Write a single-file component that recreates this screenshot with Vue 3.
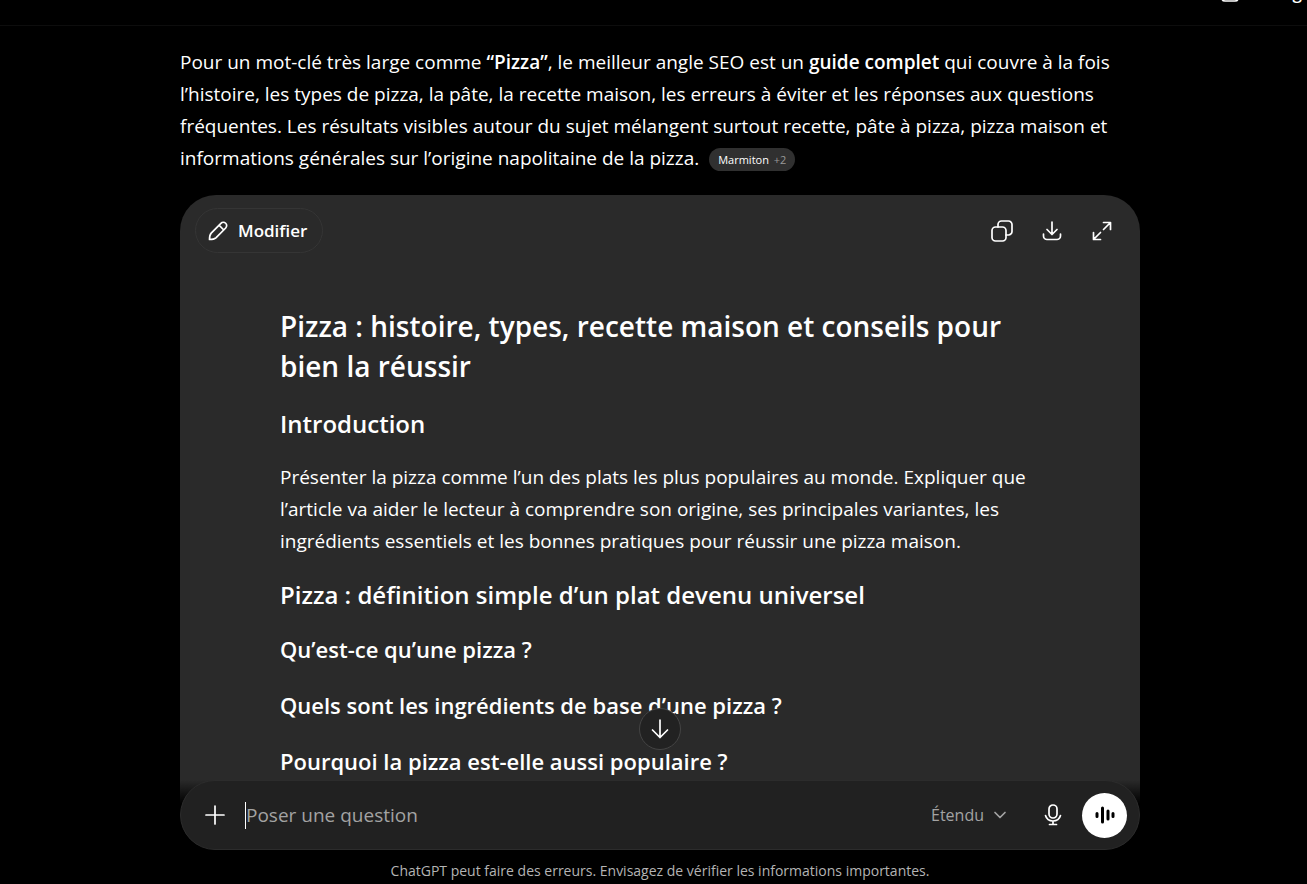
<script setup>
import { ref } from 'vue'

const question = ref('')
const mode = ref('Étendu')
const sections = [
  'Qu’est-ce qu’une pizza ?',
  'Quels sont les ingrédients de base d’une pizza ?',
  'Pourquoi la pizza est-elle aussi populaire ?',
]
</script>

<template>
  <div class="app">
    <header class="topbar">
      <button class="share" type="button">
        <svg width="20" height="20" viewBox="0 0 20 20" aria-hidden="true">
          <path d="M10 12V2M6 6l4-4 4 4M2 11v4a3 3 0 0 0 3 3h10a3 3 0 0 0 3-3v-4" />
        </svg>
        <span>Partager</span>
      </button>
    </header>

    <main class="thread">
      <p class="body intro">
        Pour un mot-clé très large comme <strong>“Pizza”</strong>, le meilleur angle SEO est un
        <strong>guide complet</strong> qui couvre à la fois l’histoire, les types de pizza, la pâte,
        la recette maison, les erreurs à éviter et les réponses aux questions fréquentes. Les
        résultats visibles autour du sujet mélangent surtout recette, pâte à pizza, pizza maison et
        informations générales sur l’origine napolitaine de la pizza.
        <a class="source" href="#">Marmiton <span>+2</span></a>
      </p>

      <article class="card">
        <div class="toolbar">
          <button class="edit" type="button">
            <svg width="22" height="22" viewBox="0 0 22 22" aria-hidden="true">
              <path d="M2.5 19.5 C2.5 16.5 2.8 14.6 4.2 13.1 L13.9 3.3 A3.2 3.2 0 0 1 18.7 8 L8.9 17.8 C7.4 19.2 5.5 19.5 2.5 19.5 Z M12 5.2 L16.8 10" />
            </svg>
            Modifier
          </button>
          <div class="actions">
            <button type="button" aria-label="Copier">
              <svg width="24" height="24" viewBox="0 0 24 24" aria-hidden="true">
                <rect x="2" y="8" width="14" height="14" rx="3.5" />
                <path d="M8 8V5.5A3.5 3.5 0 0 1 11.5 2H18.5A3.5 3.5 0 0 1 22 5.5V12.5A3.5 3.5 0 0 1 18.5 16H16" />
              </svg>
            </button>
            <button type="button" aria-label="Télécharger">
              <svg width="24" height="24" viewBox="0 0 24 24" aria-hidden="true">
                <path d="M12 3V15M7 10.5L12 15.5L17 10.5M3.5 15V17A3.5 3.5 0 0 0 7 20.5H17A3.5 3.5 0 0 0 20.5 17V15" />
              </svg>
            </button>
            <button type="button" aria-label="Agrandir">
              <svg width="24" height="24" viewBox="0 0 24 24" aria-hidden="true">
                <path d="M13.5 10.5L20 4M13.5 3.5H20.5V10.5M10.5 13.5L4 20M3.5 13.5V20.5H10.5" />
              </svg>
            </button>
          </div>
        </div>

        <div class="document">
          <h1>Pizza : histoire, types, recette maison et conseils pour bien la réussir</h1>
          <h2>Introduction</h2>
          <p class="body">
            Présenter la pizza comme l’un des plats les plus populaires au monde. Expliquer que
            l’article va aider le lecteur à comprendre son origine, ses principales variantes, les
            ingrédients essentiels et les bonnes pratiques pour réussir une pizza maison.
          </p>
          <h2>Pizza : définition simple d’un plat devenu universel</h2>
          <h3 v-for="title in sections" :key="title">{{ title }}</h3>
        </div>
      </article>
    </main>

    <footer class="dock">
      <button class="scroll-down" type="button" aria-label="Aller en bas">
        <svg width="24" height="24" viewBox="0 0 24 24" aria-hidden="true">
          <path d="M12 3V20.5M4.5 13L12 20.5L19.5 13" />
        </svg>
      </button>
      <form class="composer" @submit.prevent>
        <button class="icon" type="button" aria-label="Ajouter">
          <svg width="22" height="22" viewBox="0 0 22 22" aria-hidden="true">
            <path d="M11 2V20M2 11H20" />
          </svg>
        </button>
        <div class="field">
          <span class="caret"></span>
          <input v-model="question" type="text" placeholder="Poser une question" aria-label="Poser une question" />
        </div>
        <label class="mode">
          <select v-model="mode" aria-label="Mode de réflexion">
            <option>Étendu</option>
          </select>
          <svg width="14" height="14" viewBox="0 0 14 14" aria-hidden="true">
            <path d="M2 4.5L7 9.5L12 4.5" />
          </svg>
        </label>
        <button class="icon" type="button" aria-label="Dicter">
          <svg width="24" height="24" viewBox="0 0 24 24" aria-hidden="true">
            <rect x="8" y="2" width="8" height="13" rx="4" />
            <path d="M4.5 12.5C5.5 16 8.5 18 12 18S18.5 16 19.5 12.5M12 18V21.5M8.5 21.5H15.5" />
          </svg>
        </button>
        <button class="voice" type="button" aria-label="Mode vocal">
          <svg width="22" height="22" viewBox="0 0 22 22" aria-hidden="true">
            <path d="M3 9.5V12.5M8.5 4V18M14 7V15M19 9.5V12.5" />
          </svg>
        </button>
      </form>
      <p class="notice">ChatGPT peut faire des erreurs. Envisagez de vérifier les informations importantes.</p>
    </footer>
  </div>
</template>

<style>
body {
  margin: 0;
  background: #000;
}
</style>

<style scoped>
.app {
  height: 100vh;
  display: flex;
  flex-direction: column;
  overflow: hidden;
  background: #000;
  color: #fff;
  font-family: "Open Sans", "Noto Sans", sans-serif;
}

button,
input,
select {
  font: inherit;
  color: inherit;
  background: none;
  border: 0;
  padding: 0;
  margin: 0;
}

button {
  display: flex;
  align-items: center;
  justify-content: center;
}

svg {
  display: block;
  flex: none;
  fill: none;
  stroke: currentColor;
  stroke-width: 1.7;
  stroke-linecap: round;
  stroke-linejoin: round;
}

h1,
h2,
h3,
p {
  margin: 0;
}

.topbar {
  flex: none;
  height: 25px;
  display: flex;
  justify-content: flex-end;
  align-items: flex-start;
  overflow: hidden;
  border-bottom: 1px solid #0d0d0d;
}

.share {
  gap: 8px;
  margin: -17px -12px 0 0;
  font-size: 17px;
  line-height: 20px;
  font-weight: 600;
}

.thread {
  flex: 1;
  min-height: 0;
  display: flex;
  flex-direction: column;
  gap: 20px;
  overflow: hidden;
  padding: 20px 167px 0 180px;
}

.body {
  font-size: 19px;
  line-height: 32px;
}

.intro {
  flex: none;
  padding-bottom: 1px;
}

strong {
  font-weight: 600;
}

.source {
  display: inline-block;
  margin-left: 5px;
  padding: 0 9px;
  border-radius: 12px;
  background: #303030;
  color: #fff;
  font-size: 11px;
  line-height: 23px;
  text-decoration: none;
  vertical-align: 1px;
}

.source span {
  margin-left: 2px;
  color: #999;
}

.card {
  flex: 1;
  min-height: 0;
  overflow: hidden;
  border-radius: 36px 36px 0 0;
  background: #2a2a2a;
}

.toolbar {
  display: flex;
  align-items: center;
  justify-content: space-between;
  padding: 13px 13px 0 15px;
}

.edit {
  gap: 9px;
  height: 45px;
  padding: 0 15px 0 11px;
  border: 1px solid #353535;
  border-radius: 23px;
  font-size: 17px;
  font-weight: 600;
}

.actions {
  display: flex;
}

.actions button {
  width: 50px;
  height: 44px;
}

.document {
  padding: 53px 100px 0;
}

h1 {
  font-size: 28px;
  line-height: 40px;
  font-weight: 600;
}

h2 {
  margin-top: 20px;
  font-size: 24px;
  line-height: 36px;
  font-weight: 600;
}

h2 + .body {
  margin-top: 19px;
}

h3 {
  margin-top: 24px;
  font-size: 22px;
  line-height: 32px;
  font-weight: 600;
}

h2 + h3 {
  margin-top: 20px;
}

.dock {
  position: relative;
  flex: none;
  margin-top: -24px;
  padding: 0 167px 0 180px;
  background: linear-gradient(transparent, #000 24px);
}

.scroll-down {
  position: absolute;
  left: calc(50% + 6px);
  top: -72px;
  width: 42px;
  height: 42px;
  transform: translateX(-50%);
  border: 1px solid #444;
  border-radius: 50%;
  background: #222;
}

.composer {
  display: flex;
  align-items: center;
  height: 68px;
  padding: 0 12px;
  border: 1px solid #2c2c2c;
  border-radius: 35px;
  background: #212121;
}

.icon {
  width: 44px;
  height: 44px;
}

.field {
  flex: 1;
  min-width: 0;
  display: flex;
  align-items: center;
  margin-left: 8px;
}

.caret {
  width: 1px;
  height: 27px;
  background: #fff;
}

input {
  flex: 1;
  min-width: 0;
  outline: 0;
  font-size: 19px;
  line-height: 28px;
}

input::placeholder {
  color: #a3a3a3;
  opacity: 1;
}

.mode {
  display: flex;
  align-items: center;
  gap: 9px;
  margin-right: 24px;
  color: #a3a3a3;
  font-size: 16px;
}

select {
  appearance: none;
  outline: 0;
}

.voice {
  width: 45px;
  height: 45px;
  margin-left: 7px;
  border-radius: 50%;
  background: #fff;
  color: #000;
}

.voice svg {
  stroke-width: 3;
}

.notice {
  padding: 10px 0 3px;
  color: #b4b4b4;
  font-size: 14px;
  line-height: 21px;
  text-align: center;
}
</style>
